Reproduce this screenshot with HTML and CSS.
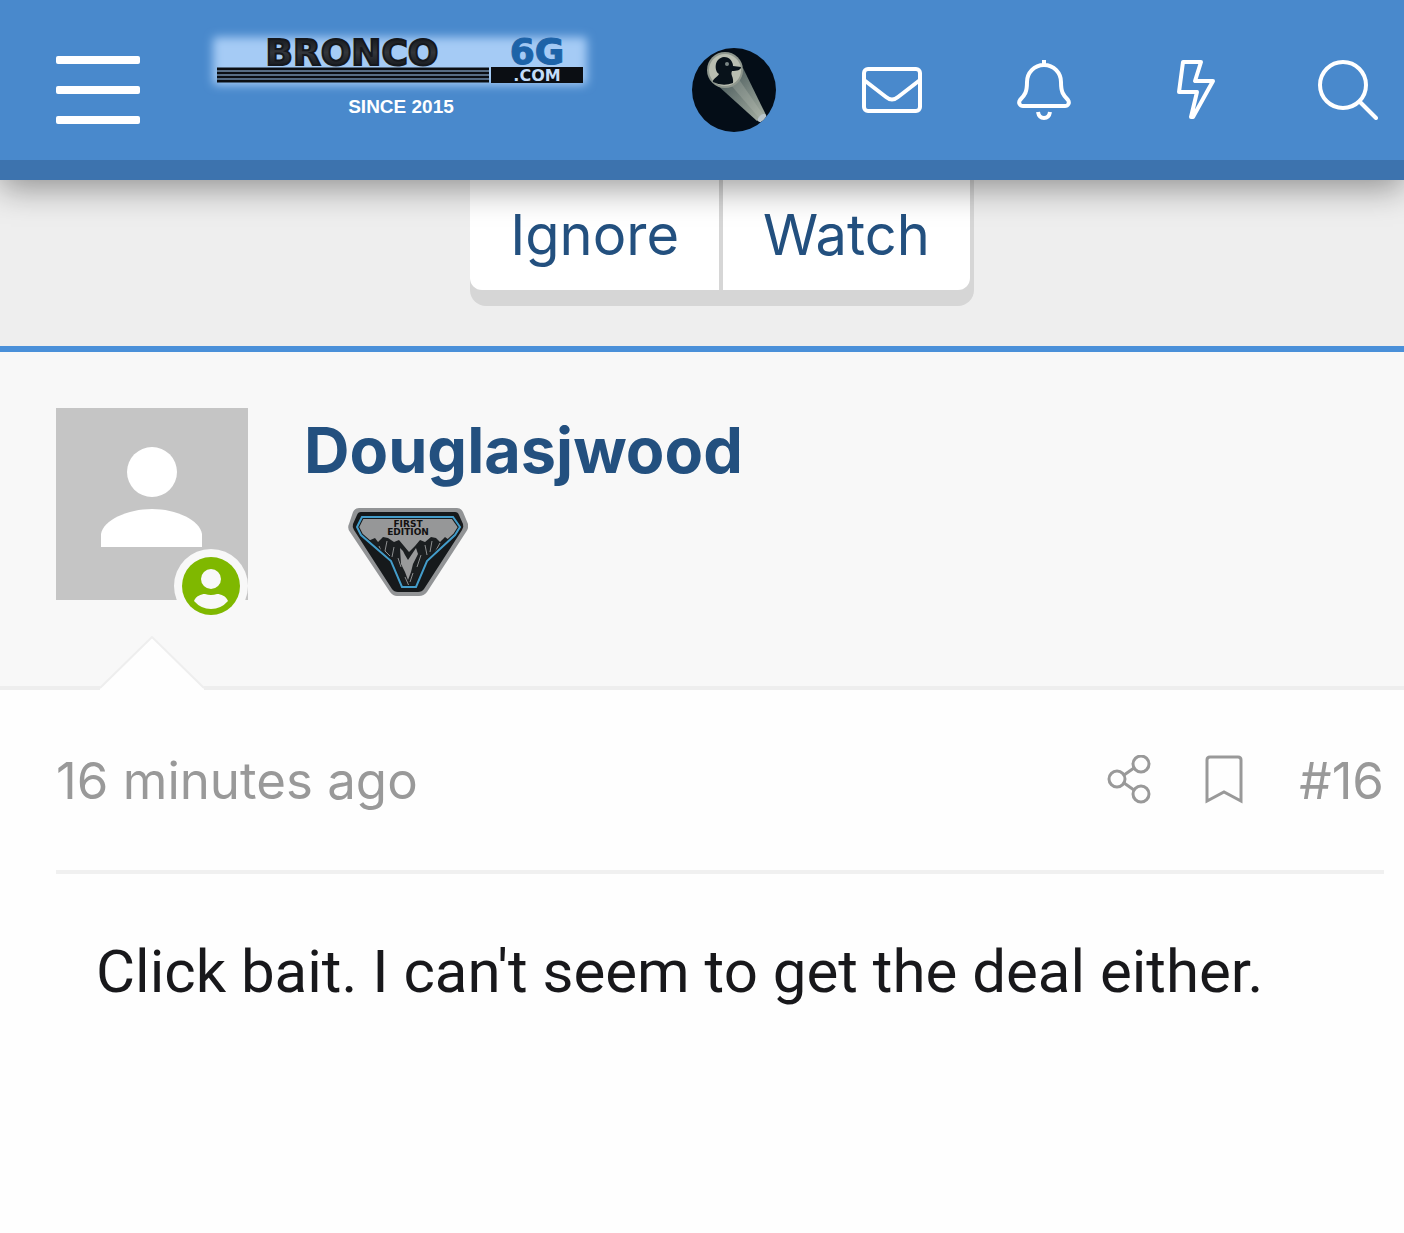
FILE: index.html
```html
<!DOCTYPE html>
<html lang="en">
<head>
    <meta charset="utf-8">
    <meta name="viewport" content="width=device-width">
    <title>Bronco6G</title>
    <link rel="stylesheet" href="styles.css">
</head>
<body>
    <header class="nav">
        <button class="icon menu" type="button" aria-label="Menu"><span></span><span></span><span></span></button>
        <a class="logo" href="#" aria-label="Bronco6G.com">
            <svg width="400" height="110" viewBox="200 20 400 110">
                <defs>
                    <filter id="glow" x="-10%" y="-50%" width="120%" height="200%">
                        <feGaussianBlur stdDeviation="5"/>
                    </filter>
                    <linearGradient id="steel" x1="0" y1="0" x2="0" y2="1">
                        <stop offset="0" stop-color="#0b0e13"/>
                        <stop offset=".5" stop-color="#33363b"/>
                        <stop offset="1" stop-color="#0b0e13"/>
                    </linearGradient>
                </defs>
                <rect x="213" y="37" width="374" height="48" rx="4" fill="#a5cbf5" filter="url(#glow)"/>
                <text class="logo-word" x="352" y="65" text-anchor="middle" fill="url(#steel)">BRONCO</text>
                <text class="logo-gen" x="537" y="64" text-anchor="middle">6G</text>
                <path d="M217 69H489M217 73H489M217 77H489M217 81H489" stroke="#0b0e13" stroke-width="3"/>
                <rect x="491" y="67" width="92" height="16" fill="#0b0e13"/>
                <text class="logo-com" x="537" y="81" text-anchor="middle">.COM</text>
                <text class="logo-since" x="401" y="113" text-anchor="middle">SINCE 2015</text>
            </svg>
        </a>
        <nav class="tools">
            <a class="icon account" href="#" aria-label="Account">
                <svg width="84" height="84" viewBox="0 0 84 84">
                    <defs>
                        <clipPath id="round"><circle cx="42" cy="42" r="42"/></clipPath>
                        <linearGradient id="beam" x1="30" y1="30" x2="72" y2="72" gradientUnits="userSpaceOnUse">
                            <stop offset="0" stop-color="#4d5d5e"/>
                            <stop offset="1" stop-color="#a5aea2"/>
                        </linearGradient>
                    </defs>
                    <g clip-path="url(#round)">
                        <rect width="84" height="84" fill="#040d17"/>
                        <path d="M24 36L65 73L74 67L51 20Z" fill="url(#beam)"/>
                        <path d="M38 36L68 71L72 68L46 30Z" fill="#b5beb2" opacity=".3"/>
                        <circle cx="33" cy="22" r="18" fill="#8f978e"/>
                        <circle cx="33" cy="22" r="16" fill="#b9beb1"/>
                        <path d="M21 34C20 31 26 29 27 26C22 23 22 10 32 9C38 9 41 14 41 18L49 19C49 22 45 23 40 23C38 27 42 29 41 35Q31 39 21 34Z" fill="#08121a"/>
                        <circle cx="35" cy="16" r="2" fill="#7b8785"/>
                        <ellipse cx="70" cy="70" rx="5" ry="3" transform="rotate(-40 70 70)" fill="#b9c4ca"/>
                    </g>
                </svg>
            </a>
            <a class="icon" href="#" aria-label="Inbox">
                <svg class="line" width="60" height="60" viewBox="0 0 60 60">
                    <rect x="2" y="9" width="56" height="42" rx="4"/>
                    <path d="M2 20L24 37Q30 42 36 37L58 20"/>
                </svg>
            </a>
            <a class="icon" href="#" aria-label="Alerts">
                <svg class="line" width="60" height="60" viewBox="0 0 60 60">
                    <path d="M30 0V5M30 5C20 5 13 13 13 22C13 32 11 35 6 40C4 43 6 46 9 46H51C54 46 56 43 54 40C49 35 47 32 47 22C47 13 40 5 30 5Z"/>
                    <path d="M24 52Q25 58 30 58Q35 58 36 52"/>
                </svg>
            </a>
            <a class="icon" href="#" aria-label="What's new">
                <svg class="line" width="60" height="60" viewBox="0 0 60 60">
                    <path d="M17 2H35L29 21H47L27 57L25 57L31 32H13Z"/>
                </svg>
            </a>
            <button class="icon" type="button" aria-label="Search">
                <svg class="line" width="60" height="60" viewBox="0 0 60 60">
                    <circle cx="25" cy="25" r="23"/>
                    <path d="M42 42L58 58" stroke-linecap="round"/>
                </svg>
            </button>
        </nav>
    </header>

    <div class="thread-actions">
        <div class="btn-group">
            <button type="button">Ignore</button>
            <button type="button">Watch</button>
        </div>
    </div>

    <article class="post">
        <div class="post-user">
            <a class="avatar" href="#" aria-label="Douglasjwood">
                <svg width="192" height="192" viewBox="0 0 192 192">
                    <rect width="192" height="192" fill="#c5c5c5"/>
                    <circle cx="96" cy="64" r="25" fill="#fff"/>
                    <path d="M45 139V126C47 112 72 101 96 101C120 101 144 112 146 126V139Z" fill="#fff"/>
                </svg>
                <svg class="online" width="74" height="74" viewBox="0 0 74 74">
                    <circle cx="37" cy="37" r="37" fill="#f8f8f8"/>
                    <circle cx="37" cy="37" r="29" fill="#7fb800"/>
                    <circle cx="37" cy="30" r="10" fill="#f8f8f8"/>
                    <path d="M20 52C22 47 27 45 31 45Q37 47 43 45C47 45 52 47 54 52Q47 60 37 60Q27 60 20 52Z" fill="#f8f8f8"/>
                </svg>
            </a>
            <div class="user-info">
                <a class="username" href="#">Douglasjwood</a>
                <svg class="badge" width="120" height="88" viewBox="0 0 120 88">
                    <path d="M11 0H109Q113 0 115 4L120 16Q121 20 118 24L79 84Q76 88 71 88H49Q45 88 42 84L2 24Q-1 20 1 16L5 4Q7 0 11 0Z" fill="#929496"/>
                    <path d="M13 4H107Q110 4 111 7L115 16Q116 19 114 22L76 81Q74 84 70 84H50Q46 84 44 81L6 22Q4 19 5 16L9 7Q10 4 13 4Z" fill="#16191b"/>
                    <path d="M14 9H105L112 19L107 27L79 53L68 79H54L43 53L13 27L9 19Z" fill="#969798"/>
                    <path d="M20 33L27 30L30 34L35 29L40 30L46 34L51 32L56 38L61 44L67 38L72 32L77 34L83 29L88 30L92 34L97 29L101 32L78 53L67 79H55L44 53Z" fill="#1b1e20"/>
                    <path d="M52 40Q55 42 57 47L60 52L64 46L68 40L70 46L65 56L63 64L60 72L57 64L53 56Z" fill="#999a9b"/>
                    <path d="M31 38L34 45M39 33L37 43L42 48M46 39L44 49M77 37L79 47M84 33L82 44M92 35L87 44M50 50L53 59M73 47L69 59M57 69L61 78M65 65L62 74" stroke="#8c8e8f" fill="none"/>
                    <path d="M14 9H105L112 19L107 27L79 53L68 79H54L43 53L13 27L9 19Z" fill="none" stroke="#16191b" stroke-width="4"/>
                    <path d="M14 9H105L112 19L107 27L79 53L68 79H54L43 53L13 27L9 19Z" fill="none" stroke="#439cc9" stroke-width="2"/>
                    <text x="60" y="19" text-anchor="middle">FIRST</text>
                    <text x="60" y="27" text-anchor="middle">EDITION</text>
                </svg>
            </div>
            <svg class="arrow" width="104" height="54" viewBox="0 0 104 54">
                <path d="M0 54V51L52 0L104 51V54Z" fill="#fefefe"/>
                <path d="M0 52L52 1L104 52" fill="none" stroke="#eee" stroke-width="2"/>
            </svg>
        </div>
        <div class="post-main">
            <div class="post-meta">
                <a class="date" href="#"><time>16 minutes ago</time></a>
                <a class="icon" href="#" aria-label="Share">
                    <svg class="thin" width="44" height="50" viewBox="0 0 44 50">
                        <circle cx="10" cy="24" r="8"/>
                        <circle cx="34" cy="9" r="8"/>
                        <circle cx="34" cy="39" r="8"/>
                        <path d="M17 20L27 13M17 28L27 35"/>
                    </svg>
                </a>
                <button class="icon" type="button" aria-label="Add bookmark">
                    <svg class="thin" width="38" height="50" viewBox="0 0 38 50">
                        <path d="M2 46V5Q2 2 5 2H33Q36 2 36 5V46L19 37Z"/>
                    </svg>
                </button>
                <a class="number" href="#">#16</a>
            </div>
            <p class="message">Click bait. I can't seem to get the deal either.</p>
        </div>
    </article>
</body>
</html>
```
FILE: styles.css
```css
body
{
    margin:0;
    background:#fefefe;
    color:#18181b;
    font-family:Inter,"Open Sans",sans-serif;
}
a
{
    color:inherit;
    text-decoration:none;
}
svg
{
    display:block;
}
button
{
    padding:0;
    border:0;
    background:none;
    color:inherit;
    font:inherit;
    cursor:pointer;
}
.icon
{
    flex:none;
}

/* top bar */
.nav
{
    position:relative;
    z-index:2;
    display:flex;
    align-items:center;
    height:140px;
    padding:20px 26px 0 56px;
    background:#4989cc;
    border-bottom:20px solid #3d73ae;
    box-shadow:0 8px 32px rgba(0,0,0,.4);
}
.menu
{
    display:grid;
    gap:22px;
    width:84px;
}
.menu span
{
    height:8px;
    border-radius:2px;
    background:#fff;
}
.logo
{
    align-self:flex-start;
    margin-left:60px;
}
.logo-word, .logo-gen, .logo-com
{
    font-family:"DejaVu Sans",sans-serif;
    font-weight:bold;
}
.logo-word
{
    font-size:36px;
    stroke:#15181d;
    stroke-width:2px;
}
.logo-gen
{
    font-size:36px;
    fill:#1d63a8;
    stroke:#1d63a8;
}
.logo-com
{
    font-size:16px;
    fill:#c3dcfa;
}
.logo-since
{
    font-family:"Liberation Sans",Arial,sans-serif;
    font-size:19px;
    font-weight:bold;
    fill:#fff;
}
.tools
{
    display:flex;
    align-items:center;
    gap:92px;
    margin-left:auto;
}
.account
{
    margin-right:-6px;
}
.line
{
    fill:none;
    stroke:#fff;
    stroke-width:4px;
    stroke-linejoin:round;
}

/* ignore / watch */
.thread-actions
{
    display:flex;
    justify-content:center;
    padding-bottom:40px;
    background:#eee;
    border-bottom:6px solid #4a90d9;
}
.btn-group
{
    display:flex;
    gap:4px;
    padding:0 4px 16px 0;
    margin-left:40px;
    background:#d6d6d6;
    border-radius:0 0 16px 16px;
}
.btn-group button
{
    height:110px;
    padding:0 40px;
    background:#fff;
    color:#23507f;
    font-size:56px;
}
.btn-group button:first-child
{
    border-bottom-left-radius:12px;
}
.btn-group button:last-child
{
    border-bottom-right-radius:12px;
}

/* post */
.post-user
{
    position:relative;
    display:flex;
    gap:56px;
    padding:56px 56px 86px;
    background:#f8f8f8;
    border-bottom:4px solid #eee;
}
.avatar
{
    position:relative;
    flex:none;
}
.online
{
    position:absolute;
    right:0;
    bottom:-23px;
}
.username
{
    display:block;
    color:#23507f;
    font-size:63px;
    font-weight:700;
    line-height:84px;
}
.badge
{
    margin:16px 0 0 44px;
}
.badge text
{
    font-family:"DejaVu Sans",sans-serif;
    font-size:9px;
    font-weight:bold;
    fill:#111;
}
.arrow
{
    position:absolute;
    left:100px;
    bottom:-4px;
}
.post-main
{
    padding:0 20px 0 56px;
}
.post-meta
{
    display:flex;
    align-items:center;
    height:180px;
    border-bottom:4px solid #f0f0f0;
    color:#999;
    font-size:51px;
}
.date
{
    margin-right:auto;
}
.number
{
    margin-left:56px;
}
.post-meta button
{
    margin-left:54px;
}
.thin
{
    fill:none;
    stroke:#999;
    stroke-width:3px;
}
.message
{
    margin:56px 40px;
    font-family:Roboto,sans-serif;
    font-size:60px;
    line-height:84px;
}
```
